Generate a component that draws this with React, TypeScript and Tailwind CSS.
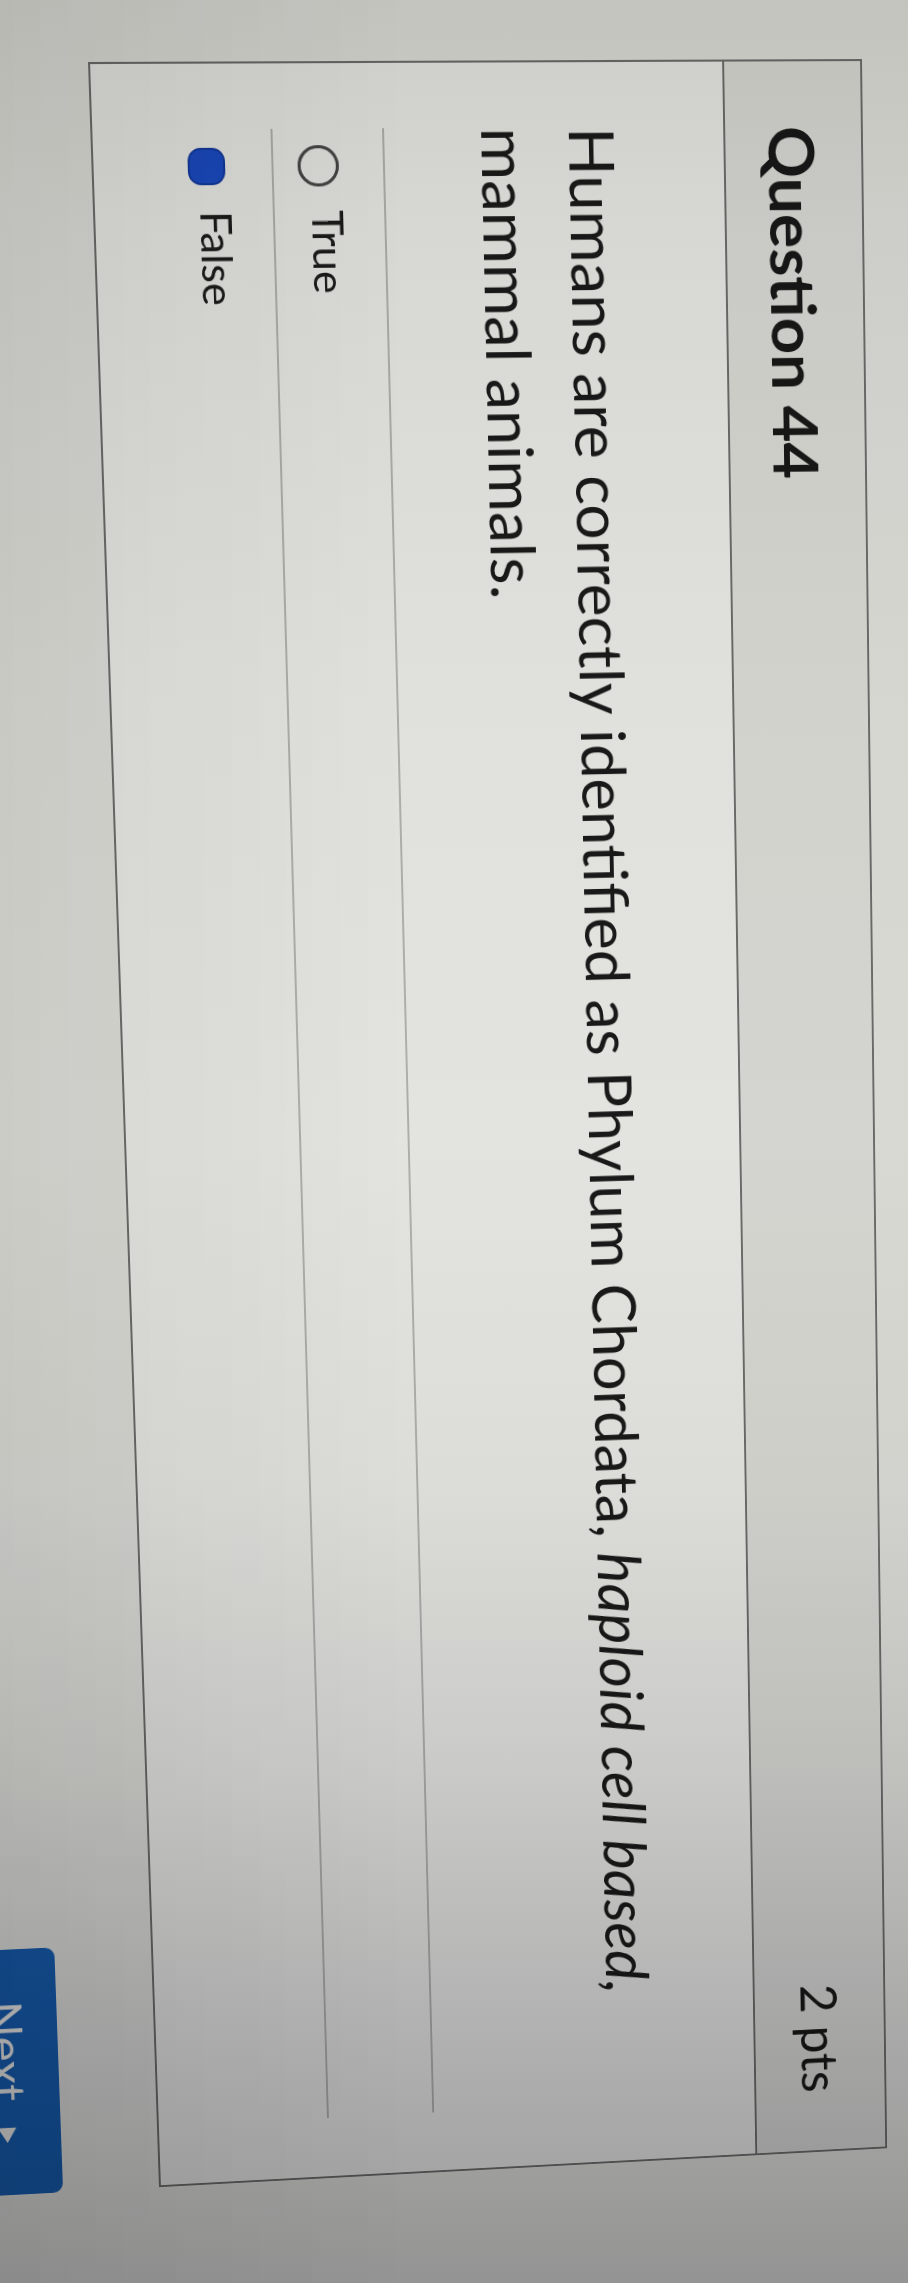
import React from "react";

type Pt = [number, number];

// Gauss-Jordan elimination for the 8x8 projective system
function solveLinear(A: number[][], b: number[]): number[] {
  const n = b.length;
  const M = A.map((row, i) => [...row, b[i]]);
  for (let c = 0; c < n; c++) {
    let p = c;
    for (let r = c + 1; r < n; r++) if (Math.abs(M[r][c]) > Math.abs(M[p][c])) p = r;
    [M[c], M[p]] = [M[p], M[c]];
    for (let r = 0; r < n; r++) {
      if (r === c) continue;
      const f = M[r][c] / M[c][c];
      for (let k = c; k <= n; k++) M[r][k] -= f * M[c][k];
    }
  }
  return M.map((row, i) => row[n] / row[i]);
}

// Builds a CSS matrix3d that maps four page points onto four screen points
function projective(src: Pt[], dst: Pt[]): string {
  const A: number[][] = [];
  const b: number[] = [];
  for (let i = 0; i < 4; i++) {
    const [x, y] = src[i];
    const [u, v] = dst[i];
    A.push([x, y, 1, 0, 0, 0, -x * u, -y * u]);
    b.push(u);
    A.push([0, 0, 0, x, y, 1, -x * v, -y * v]);
    b.push(v);
  }
  const [a, bb, c, d, e, f, g, h] = solveLinear(A, b);
  return `matrix3d(${a},${d},0,${g},${bb},${e},0,${h},0,0,1,0,${c},${f},0,1)`;
}

// Card corners on the page (offset 100/100, 2160 x 774) and where they land on the display
const PAGE_TRANSFORM = projective(
  [
    [100, 100],
    [2260, 100],
    [2260, 874],
    [100, 874],
  ],
  [
    [862, 59],
    [887, 2148],
    [159, 2187],
    [88, 62],
  ]
);

function Radio({ checked }: { checked?: boolean }) {
  return (
    <div className="flex h-[41px] w-[40px] shrink-0 items-center justify-center">
      {checked ? (
        <div className="h-[37px] w-[36px] rounded-[13px] border-2 border-[#1440b2] bg-[#1d52d8] shadow-[0_0_0_3px_rgba(255,255,255,0.85)]" />
      ) : (
        <div className="h-[41px] w-[40px] rounded-full border-[3px] border-[#4d4d4d] bg-white" />
      )}
    </div>
  );
}

function Answer({ label, checked }: { label: string; checked?: boolean }) {
  return (
    <div className="flex items-start gap-[23px] border-t-2 border-[#c3c3c3] pb-[24px] pl-[16px] pt-[44px]">
      <Radio checked={checked} />
      <span className="-mt-[14px] text-[42px] leading-[52px] text-[#1e1e1e]">{label}</span>
    </div>
  );
}

export default function App() {
  return (
    <div className="relative h-[2283px] w-[908px] overflow-hidden bg-[#f4f4f3] font-[Lato,Liberation_Sans,sans-serif]">
      <div
        className="flex h-[1150px] w-[2400px] origin-top-left flex-col bg-[#f4f4f3] pl-[100px] pt-[100px]"
        style={{ transform: PAGE_TRANSFORM }}
      >
        <section className="flex h-[774px] w-[2160px] shrink-0 flex-col border-2 border-[#777777] bg-white">
          <header className="flex h-[140px] shrink-0 items-center justify-between border-b-2 border-[#777777] bg-[#efefee] px-[63px]">
            <h2 className="text-[63px] font-bold leading-none text-[#1a1a1a]">Question 44</h2>
            <span className="text-[54px] leading-none text-[#1a1a1a]">2 pts</span>
          </header>
          <div className="flex flex-col px-[63px] pt-[88px]">
            <p className="text-[62px] leading-[88px] text-[#1c1c1c]">
              Humans are correctly identified as Phylum Chordata, <em>haploid cell based,</em>
              <br />
              mammal animals.
            </p>
            <div className="mt-[77px] flex flex-col">
              <Answer label="True" />
              <Answer label="False" checked />
            </div>
          </div>
        </section>
        <div className="mt-[100px] flex w-[2160px] justify-end">
          <button className="flex h-[128px] w-[262px] items-start justify-center gap-[27px] rounded-[10px] bg-[#1866c2] pt-[23px] text-[50px] leading-[60px] text-white">
            <span>Next</span>
            <svg className="mt-[22px]" width="19" height="21" viewBox="0 0 20 22" aria-hidden="true">
              <path d="M2 1 L19 11 L2 21 Z" fill="#ffffff" />
            </svg>
          </button>
        </div>
      </div>
      {/* room lighting falling across the display */}
      <div className="pointer-events-none absolute inset-0 mix-blend-multiply bg-[linear-gradient(to_bottom,#cdcdc9_0%,#d7d7d3_10%,#e0e0dc_30%,#e3e3df_50%,#dcdcd8_65%,#c9c9c7_78%,#b3b3b3_88%,#9b9b9b_100%)]" />
      <div className="pointer-events-none absolute inset-0 bg-[linear-gradient(to_right,rgba(0,0,0,0.06),rgba(0,0,0,0)_45%)]" />
    </div>
  );
}
